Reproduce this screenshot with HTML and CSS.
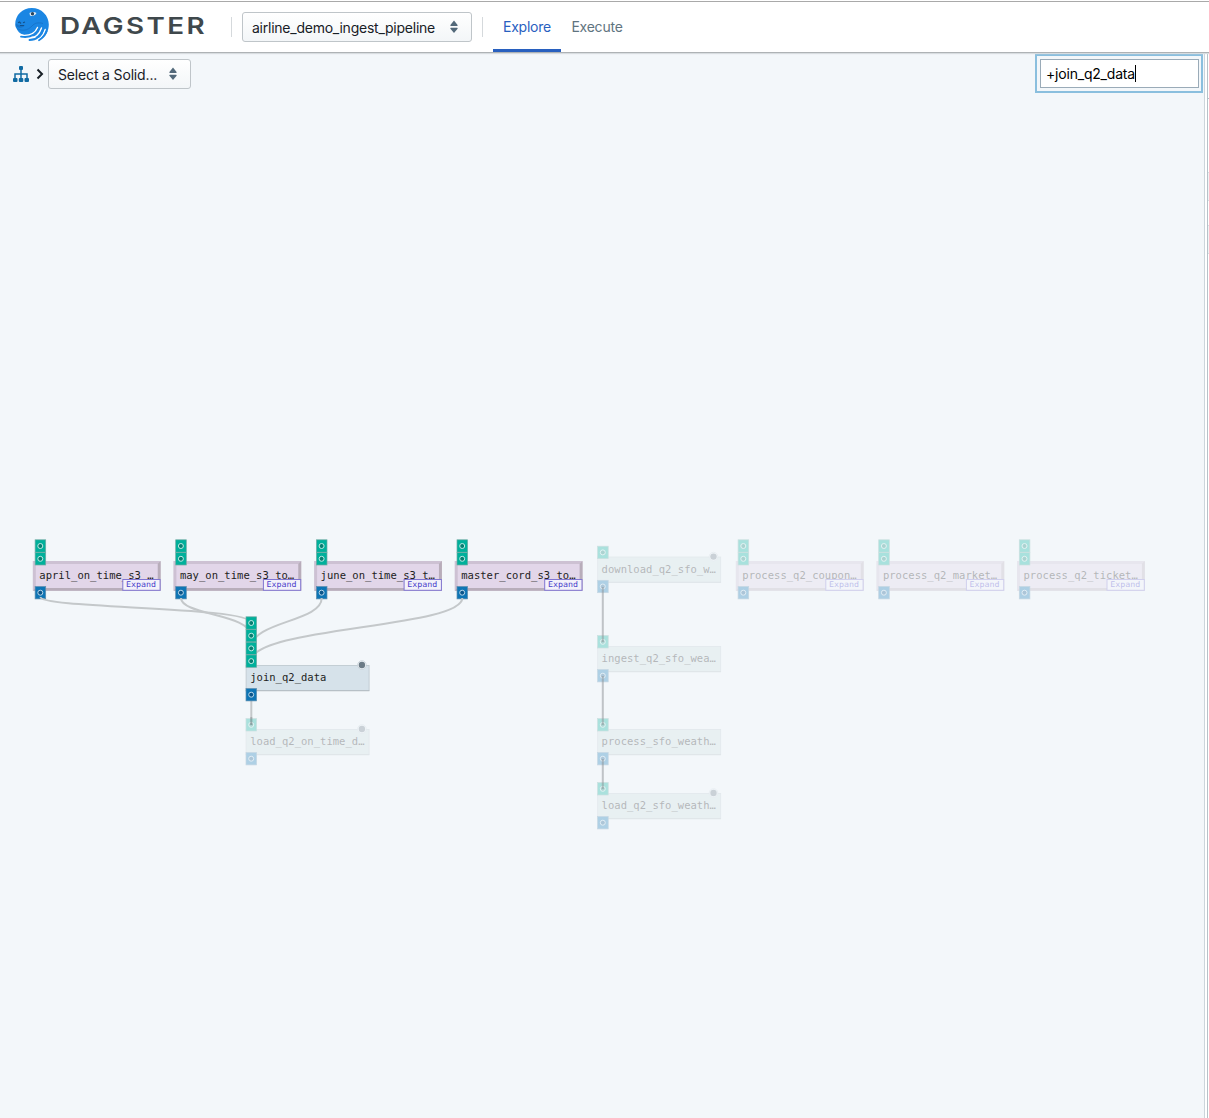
FILE: index.html
```
<!DOCTYPE html>
<html lang="en">
<head>
<meta charset="utf-8">
<title>Dagster</title>
<link rel="stylesheet" href="styles.css">
</head>
<body>
<header class="topbar">
  <svg class="logo" width="36" height="36" viewBox="0 0 36 36" aria-hidden="true">
    <path fill="#1b86e3" d="M1.200 17.500C1.200 8 8.500 1 17.800 1C27.500 1 34.800 8.500 34.800 17.500C34.800 24 32 29 27.500 31.800L20 29.500L10 28C5.500 26.500 3.500 24 2.500 21.500C1.600 20 1.200 19 1.200 17.500Z"/>
    <path fill="#1873c8" d="M2 16.500C4 18.500 8 19 11 18C9.500 21 5.500 21.500 2.200 19.500Z"/>
    <path fill="none" stroke="#1875cc" stroke-width="1" d="M3 21.500C8 24.500 14 23.500 18 19C20.500 16.200 24 15 29 16.500"/>
    <path fill="none" stroke="#fff" stroke-width="1.400" stroke-linecap="round" d="M8 28.300C17 29 21.500 25.500 23.500 20.500M13 31.300C21 32 25.500 27 27.500 21M19.500 33.800C26 33 29.500 28 31.200 22.500"/>
    <path fill="none" stroke="#1b86e3" stroke-width="1.800" stroke-linecap="round" d="M7 29.700C16 31 22.500 28 25.500 20.500M15.500 33C23 33 27.500 28 29.500 21.500M25 33.200Q30.500 30 32.500 24.500"/>
    <path fill="#e8f3fc" d="M15.500 6C17.500 4.700 20.500 4.700 22.500 6C21 8.700 18 9.500 16 8.500Z"/>
    <circle cx="18.500" cy="6.800" r="1.700" fill="#29435a"/>
    <path fill="none" stroke="#14518a" stroke-width="1.100" d="M4 15.800L5.500 15L7 16.500M9 15.800L11 15M6 18.500H10"/>
  </svg>
  <svg class="wordmark" width="148" height="24" viewBox="0 0 148 24"><text x="-1" y="19.600" textLength="147" lengthAdjust="spacingAndGlyphs">DAGSTER</text></svg>
  <span class="divider"></span>
  <button class="select pipeline"><span class="pipeline-name">airline_demo_ingest_pipeline</span><svg class="caret" width="10" height="14" viewBox="0 0 10 14"><path d="M5 .5L8.600 5Q9 6 8 6H2Q1 6 1.400 5ZM5 13L8.600 8.800Q9 7.800 8 7.800H2Q1 7.800 1.400 8.800Z"/></svg></button>
  <span class="divider second"></span>
  <nav class="tabs"><a class="tab active">Explore</a><a class="tab">Execute</a></nav>
</header>
<main class="workspace">
  <section class="explorer">
    <div class="toolbar">
      <svg class="tree" width="16" height="16" viewBox="0 0 16 16"><rect x="6" width="4" height="4" rx="1"/><rect y="12" width="4.500" height="4" rx="1"/><rect x="5.800" y="12" width="4.500" height="4" rx="1"/><rect x="11.500" y="12" width="4.500" height="4" rx="1"/><path class="tree-line" d="M8 3v10M2 13V8h12v5"/></svg>
      <svg class="chevron" width="8" height="12" viewBox="0 0 8 12"><path d="M1.500 1.500L6 6L1.500 10.500"/></svg>
      <button class="select solid"><span class="solid-name">Select a Solid...</span><svg class="caret" width="10" height="14" viewBox="0 0 10 14"><path d="M5 .5L8.600 5Q9 6 8 6H2Q1 6 1.400 5ZM5 13L8.600 8.800Q9 7.800 8 7.800H2Q1 7.800 1.400 8.800Z"/></svg></button>
      <div class="search"><div class="search-input"><span class="query">+join_q2_data</span><i class="cursor"></i></div></div>
    </div>
    <svg class="graph" width="1204" height="1018" viewBox="0 100 1204 1018">
      <defs>
        <g id="inlet"><rect x=".3" y=".3" width="10.600" height="12.400" fill="#00b09b" stroke="#70aaa3" stroke-width=".7"/><circle cx="5.500" cy="6.500" r="2.500" fill="#087f72" stroke="#bdebe5"/></g>
        <g id="outlet"><rect x=".3" y=".3" width="10.600" height="12.400" fill="#0e75b5" stroke="#608fae" stroke-width=".7"/><circle cx="5.500" cy="6.500" r="2.500" fill="#0b568b" stroke="#b9d8eb"/></g>
        <g id="composite"><rect width="127.800" height="29.700" fill="#cdc1d3"/><path d="M127.800 0V29.700H0L3 27H124.800V3Z" fill="#b8adba"/><rect x="3" y="3" width="121.800" height="24" fill="#e2d6e9"/></g>
        <g id="composite-ports"><use href="#inlet" x="2" y="-21.500"/><use href="#inlet" x="2" y="-8.700"/><use href="#outlet" x="2" y="25.200"/></g>
        <g id="expand"><rect x="90" y="18.500" width="37.300" height="10.800" fill="#f3f2fa" stroke="#8176d1"/><text class="expand-text" x="93.200" y="26" textLength="30" lengthAdjust="spacingAndGlyphs">Expand</text></g>
        <g id="solid"><rect x=".4" y=".4" width="123" height="25.300" fill="currentColor" stroke="#bcc7cd" stroke-width=".8"/><path d="M0 25.700H123.600" stroke="#aeb8bd" stroke-width=".8"/></g>
        <g id="dot"><circle r="4.300" fill="#f3f7fa" stroke="#c2cdd4" stroke-width=".7"/><circle r="3.200" fill="#6b7b86"/></g>
      </defs>
      <g transform="translate(32.800 561)"><use href="#composite"/><text class="name" x="6.500" y="18" textLength="114.300">april_on_time_s3_…</text><use href="#composite-ports"/><use href="#expand"/></g>
      <g transform="translate(173.400 561)"><use href="#composite"/><text class="name" x="6.500" y="18" textLength="114.300">may_on_time_s3_to…</text><use href="#composite-ports"/><use href="#expand"/></g>
      <g transform="translate(314.100 561)"><use href="#composite"/><text class="name" x="6.500" y="18" textLength="114.300">june_on_time_s3_t…</text><use href="#composite-ports"/><use href="#expand"/></g>
      <g transform="translate(454.700 561)"><use href="#composite"/><text class="name" x="6.500" y="18" textLength="114.300">master_cord_s3_to…</text><use href="#composite-ports"/><use href="#expand"/></g>
      <g class="edges">
        <path d="M40.500 597C40.500 609 251.300 606 251.300 623"/>
        <path d="M181 598C181 615 251.300 614 251.300 636"/>
        <path d="M321.700 598C321.700 622 251.300 621 251.300 648"/>
        <path d="M462.300 598C462.300 628 251.300 627 251.300 661"/>
        <path d="M251.300 695V725"/>
      </g>
      <g class="solid-node" transform="translate(245.700 665)"><use href="#solid"/><text class="name" x="4.500" y="16.200" textLength="76.200">join_q2_data</text><use href="#inlet" y="-48.500"/><use href="#inlet" y="-35.800"/><use href="#inlet" y="-23.100"/><use href="#inlet" y="-10.400"/><use href="#outlet" y="23.200"/><use href="#dot" x="116.200"/></g>
      <g class="faded solid-faded">
        <g transform="translate(245.700 729)"><use href="#solid"/><text class="name" x="4.500" y="16.200" textLength="114.300">load_q2_on_time_d…</text><use href="#inlet" y="-10.700"/><use href="#outlet" y="23.200"/><use href="#dot" x="116.200"/></g>
        <g transform="translate(597.300 556.600)"><use href="#solid"/><text class="name" x="4.300" y="16.200" textLength="114.300">download_q2_sfo_w…</text><use href="#inlet" y="-10.700"/><use href="#outlet" y="23.400"/><use href="#dot" x="116.200"/></g>
        <g transform="translate(597.300 646)"><use href="#solid"/><text class="name" x="4.300" y="16.200" textLength="114.300">ingest_q2_sfo_wea…</text><use href="#inlet" y="-10.700"/><use href="#outlet" y="23.200"/></g>
        <g transform="translate(597.300 729)"><use href="#solid"/><text class="name" x="4.300" y="16.200" textLength="114.300">process_sfo_weath…</text><use href="#inlet" y="-10.700"/><use href="#outlet" y="23.200"/></g>
        <g transform="translate(597.300 793)"><use href="#solid"/><text class="name" x="4.300" y="16.200" textLength="114.300">load_q2_sfo_weath…</text><use href="#inlet" y="-10.700"/><use href="#outlet" y="23.200"/><use href="#dot" x="116.200"/></g>
      </g>
      <g class="faded">
        <g transform="translate(735.800 561)"><use href="#composite"/><text class="name" x="6.500" y="18" textLength="114.300">process_q2_coupon…</text><use href="#composite-ports"/><use href="#expand"/></g>
        <g transform="translate(876.400 561)"><use href="#composite"/><text class="name" x="6.500" y="18" textLength="114.300">process_q2_market…</text><use href="#composite-ports"/><use href="#expand"/></g>
        <g transform="translate(1017 561)"><use href="#composite"/><text class="name" x="6.500" y="18" textLength="114.300">process_q2_ticket…</text><use href="#composite-ports"/><use href="#expand"/></g>
      </g>
      <g class="edges straight"><path d="M602.800 587V642"/><path d="M602.800 676V725"/><path d="M602.800 759V789"/><path d="M251.300 717V725"/></g>
    </svg>
  </section>
  <aside class="panel"><div class="panel-body"><i class="panel-head"></i><i class="stripe"></i><i class="stripe"></i></div></aside>
</main>
</body>
</html>
```
FILE: styles.css
```
* { box-sizing: border-box; }
body { margin: 0; height: 1118px; overflow: hidden; font: 14px Inter, "Liberation Sans", sans-serif; color: #182026; background: #f3f7fa; }
.topbar { height: 53px; display: flex; align-items: center; background: #fff; border-top: 1px solid #fff; border-bottom: 1px solid #aeb2b5; box-shadow: inset 0 1px #a9a9a9, 0 1px 1px #d8dde0; padding-left: 14px; position: relative; }
.logo { flex: none; margin-top: -3px; }
.wordmark { flex: none; margin-left: 11px; margin-top: -1px; overflow: visible; }
.wordmark text { font: 600 23.500px Inter, sans-serif; letter-spacing: 2px; fill: #3f484c; }
.divider { width: 1px; height: 20px; background: #d5d9dc; margin-left: 22px; }
.divider.second { margin-left: 10px; }
.select { font: inherit; color: inherit; display: flex; align-items: center; justify-content: space-between; height: 30px; border: 1px solid #bfc5c9; border-radius: 3px; background: linear-gradient(#fff, #f3f6f8); padding: 0 12px 0 9px; margin: 0; white-space: nowrap; }
.pipeline { width: 230px; margin-left: 10px; }
.pipeline-name { letter-spacing: -.24px; padding-top: 2px; }
.caret { flex: none; fill: #53697a; }
.tabs { display: flex; height: 51px; align-self: flex-end; margin-left: 10px; }
.tab { width: 68px; margin-right: 2px; text-align: center; line-height: 51px; letter-spacing: -.22px; color: #5f7480; }
.tab.active { color: #2860bf; border-bottom: 3px solid #2860bf; }
.workspace { display: flex; height: 1065px; }
.explorer { width: 1204px; flex: none; display: flex; flex-direction: column; }
.toolbar { height: 47px; display: flex; align-items: flex-start; padding: 1px 1px 0 13px; }
.tree { margin-top: 12px; fill: #106ba3; }
.tree-line { fill: none; stroke: #106ba3; stroke-width: 1.5; }
.chevron { margin: 14px 0 0 7px; fill: none; stroke: #182026; stroke-width: 2; }
.solid { width: 143px; margin: 5px 0 0 4px; }
.solid-name { letter-spacing: -.16px; }
.search { width: 168px; height: 39px; margin-left: auto; border: 2px solid #8abfde; padding: 3px; background: #f3f7fa; }
.search-input { height: 29px; width: 159px; background: #fff; border: 1px solid #9aabb8; display: flex; align-items: center; padding-left: 5px; color: #000; }
.query { letter-spacing: -.2px; }
.cursor { width: 1px; height: 17px; background: #000; }
.graph { flex: none; display: block; }
.name { font: 10.500px "DejaVu Sans Mono", monospace; fill: #222; }
.expand-text { font: 7.800px "DejaVu Sans Mono", monospace; fill: #4a3ecb; }
.edges { fill: none; stroke: #c4c8ca; stroke-width: 2; }
.straight { stroke: #8b9094; stroke-opacity: .5; }
.faded { opacity: .3; }
.solid-node { color: #d6e2ea; }
.solid-faded { color: #d1dfe2; }
.panel { width: 5px; background: #fff; border-left: 1px solid #ccd5db; display: flex; justify-content: flex-end; }
.panel-body { width: 2px; border-left: 1px solid #b7c2c9; display: flex; flex-direction: column; }
.panel-head { height: 46px; border-bottom: 1px solid #b7c2c9; margin-bottom: 73px; }
.stripe { height: 29px; background: #f0f3f5; margin-bottom: 24px; border-top: 1px solid #d8e0e4; border-bottom: 1px solid #d8e0e4; }
```
